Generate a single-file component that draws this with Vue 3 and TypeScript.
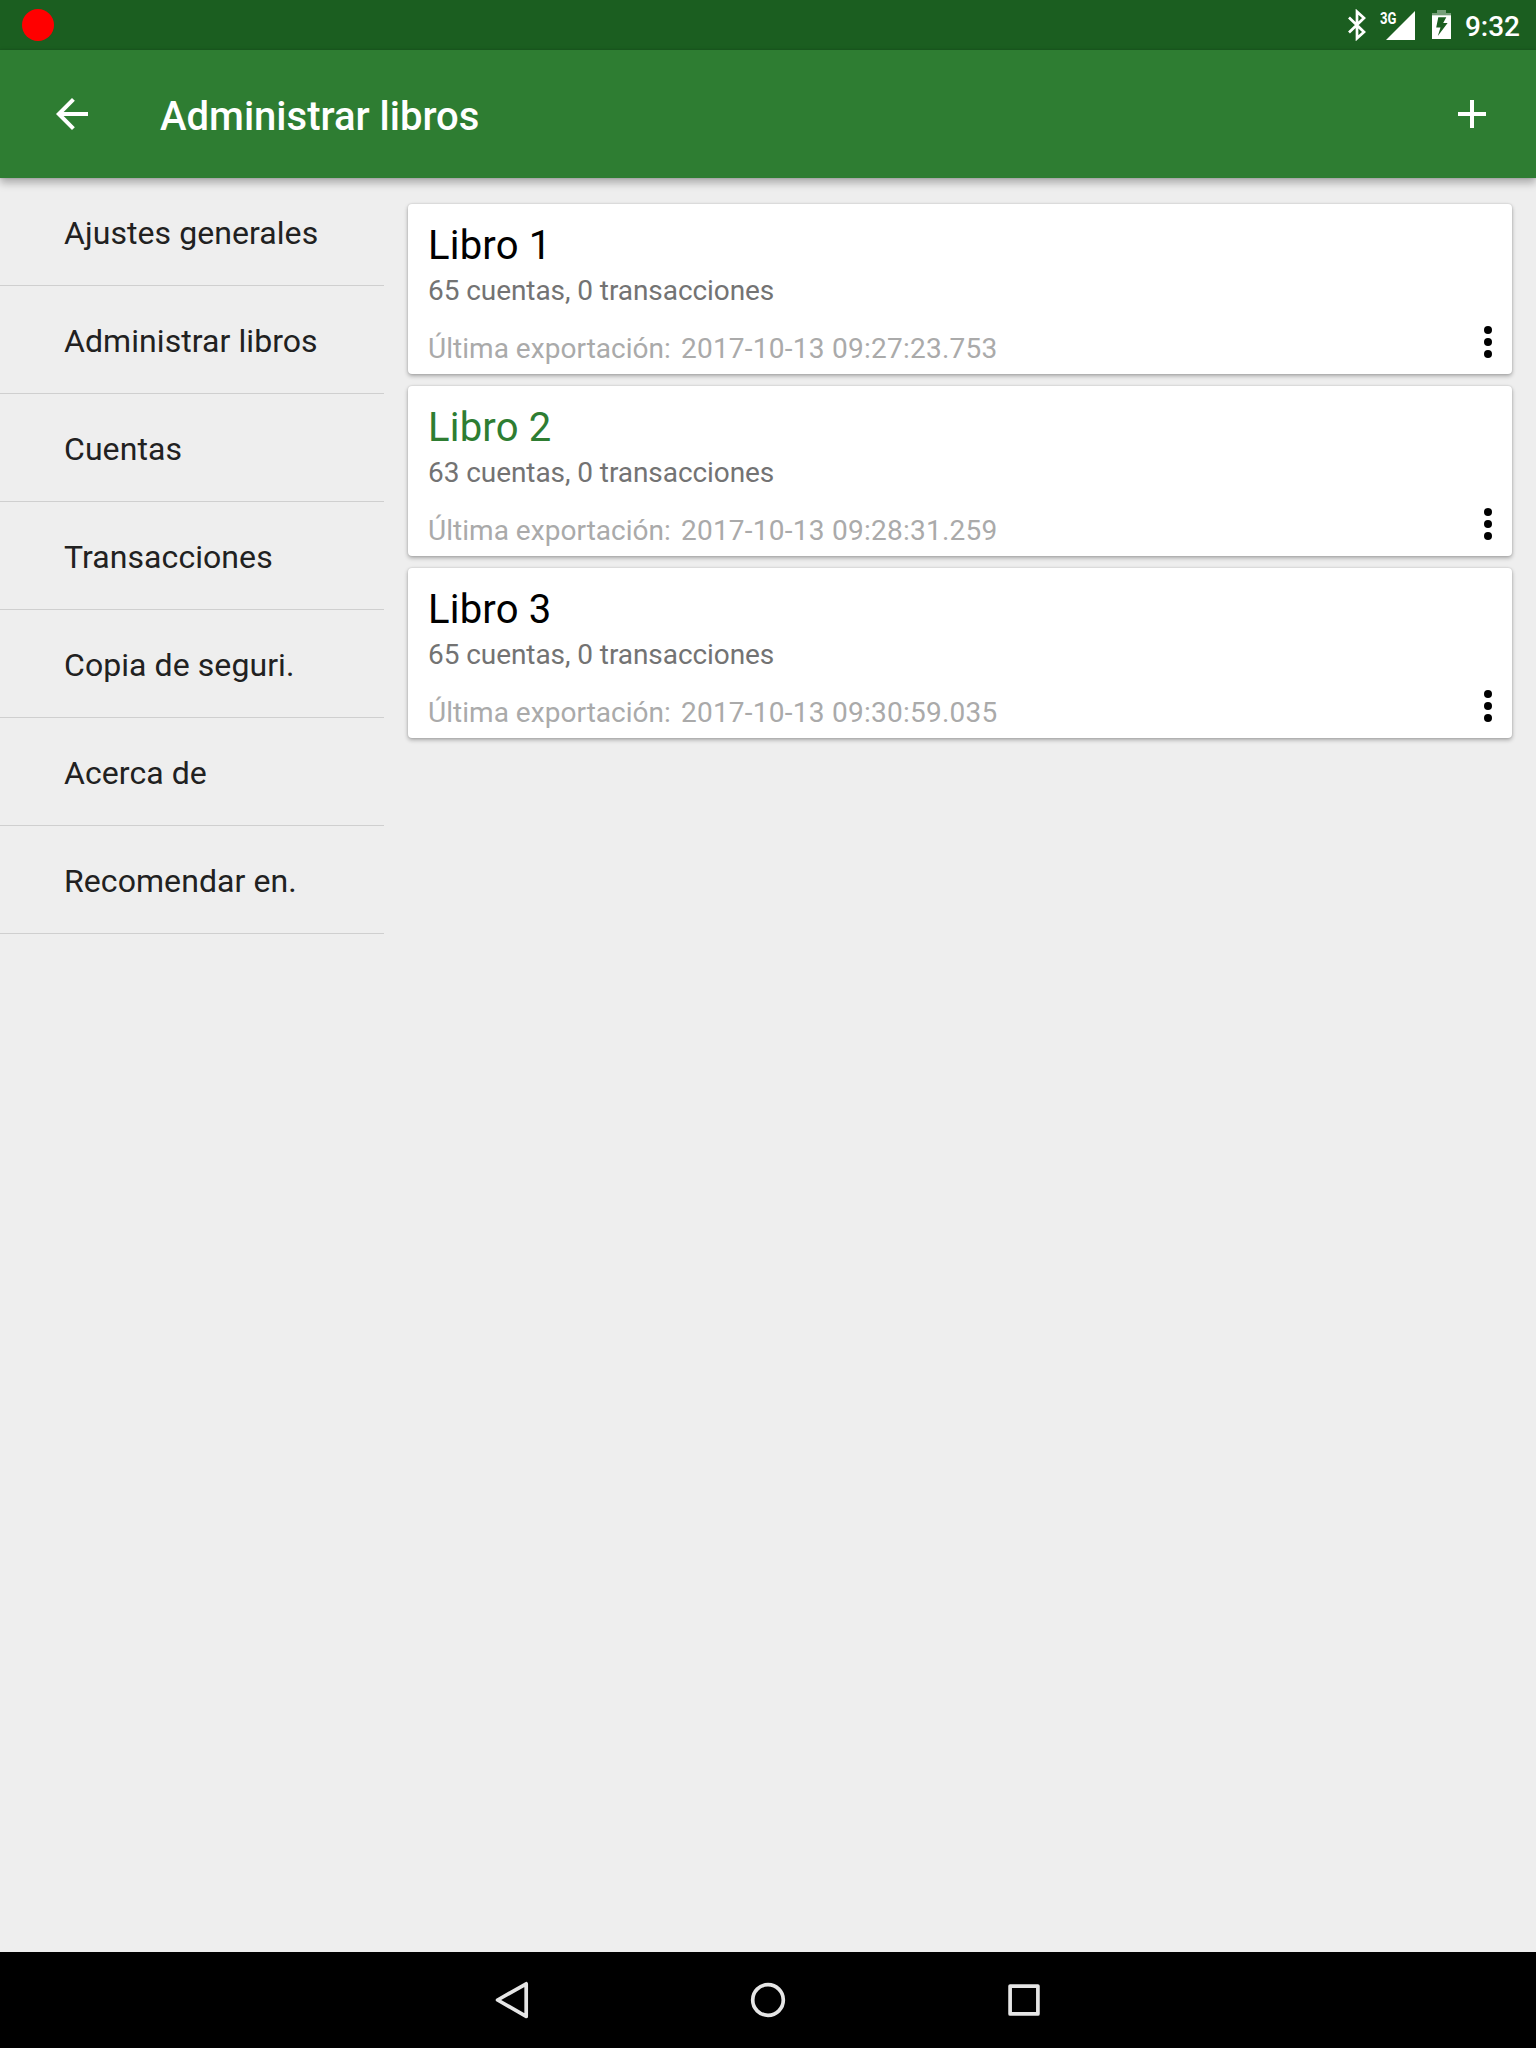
<script setup lang="ts">
interface Book {
  name: string
  stats: string
  exported: string
  active: boolean
}

const menu: string[] = [
  'Ajustes generales',
  'Administrar libros',
  'Cuentas',
  'Transacciones',
  'Copia de seguri.',
  'Acerca de',
  'Recomendar en.',
]

const books: Book[] = [
  { name: 'Libro 1', stats: '65 cuentas, 0 transacciones', exported: '2017-10-13 09:27:23.753', active: false },
  { name: 'Libro 2', stats: '63 cuentas, 0 transacciones', exported: '2017-10-13 09:28:31.259', active: true },
  { name: 'Libro 3', stats: '65 cuentas, 0 transacciones', exported: '2017-10-13 09:30:59.035', active: false },
]
</script>

<template>
  <div class="screen">
    <div class="status">
      <span class="record"></span>
      <div class="tray">
        <svg class="bt" width="20" height="32" viewBox="0 0 20 32">
          <path d="M2 8.5 17 23 10 29.3V2.7L17 9 2 23.5" fill="none" stroke="#fff" stroke-width="2.7" />
        </svg>
        <div class="signal">
          <span class="net">3G</span>
          <svg width="29" height="29" viewBox="0 0 29 29"><path d="M29 0v29H0z" fill="#fff" /></svg>
        </div>
        <svg class="battery" width="19" height="29" viewBox="0 0 19 29">
          <path d="M5 0h9v3h5v2.5H0V3h5z" fill="#fff" fill-opacity=".4" />
          <path fill-rule="evenodd" d="M0 5.3h19V29H0zM6.3 7.2 4.2 17.4h4.3L5.8 26 15.6 13.1h-4.4l3.1-5.9z" fill="#fff" />
        </svg>
        <span class="clock">9:32</span>
      </div>
    </div>

    <header class="toolbar">
      <svg width="48" height="48" viewBox="0 0 24 24">
        <path d="M20 11H7.83l5.59-5.59L12 4l-8 8 8 8 1.41-1.41L7.83 13H20z" fill="#fff" />
      </svg>
      <h1>Administrar libros</h1>
      <svg width="48" height="48" viewBox="0 0 24 24">
        <path d="M19 13h-6v6h-2v-6H5v-2h6V5h2v6h6z" fill="#fff" />
      </svg>
    </header>

    <div class="body">
      <nav class="side">
        <div v-for="item in menu" :key="item" class="item">{{ item }}</div>
      </nav>
      <main class="books">
        <article v-for="book in books" :key="book.name" class="card">
          <div class="info">
            <h2 :class="{ active: book.active }">{{ book.name }}</h2>
            <p class="stats">{{ book.stats }}</p>
            <p class="export"><span>Última exportación:</span><span class="date">{{ book.exported }}</span></p>
          </div>
          <svg class="more" width="48" height="48" viewBox="0 0 24 24">
            <circle cx="12" cy="6" r="2" /><circle cx="12" cy="12" r="2" /><circle cx="12" cy="18" r="2" />
          </svg>
        </article>
      </main>
    </div>

    <footer class="navbar">
      <svg width="256" height="96" viewBox="0 0 256 96">
        <path d="M142.2 31.8v32.6L113.6 48z" fill="none" stroke="#e6e6e6" stroke-width="3.7" stroke-linejoin="round" />
      </svg>
      <svg width="256" height="96" viewBox="0 0 256 96">
        <circle cx="128" cy="48" r="15.3" fill="none" stroke="#e6e6e6" stroke-width="3.7" />
      </svg>
      <svg width="256" height="96" viewBox="0 0 256 96">
        <rect x="114.1" y="34.1" width="27.8" height="27.8" fill="none" stroke="#e6e6e6" stroke-width="3.7" stroke-linejoin="round" />
      </svg>
    </footer>
  </div>
</template>

<style>
body {
  margin: 0;
  background: #eee;
}
</style>

<style scoped>
.screen {
  display: flex;
  flex-direction: column;
  width: 1536px;
  height: 2048px;
  overflow: hidden;
  background: #eee;
  font-family: Roboto, "Noto Sans", sans-serif;
}
svg {
  display: block;
  flex: none;
}
h1, h2, p {
  margin: 0;
}
.status {
  display: flex;
  justify-content: space-between;
  align-items: flex-start;
  box-sizing: border-box;
  height: 50px;
  flex: none;
  padding: 9px 16px 0 22px;
  background: #1b5e20;
}
.record {
  width: 32px;
  height: 32px;
  border-radius: 50%;
  background: red;
}
.tray {
  display: flex;
  align-items: flex-start;
}
.signal {
  position: relative;
  margin: 2px 17px 0 19px;
}
.net {
  position: absolute;
  left: -6px;
  top: 0;
  font: 700 16px/15px Roboto, sans-serif;
  color: #fff;
  transform: scaleX(0.82);
  transform-origin: left;
}
.battery {
  margin-top: 1px;
}
.clock {
  margin: 1px 0 0 14px;
  font-size: 28px;
  line-height: 33px;
  font-weight: 500;
  color: #fff;
}
.toolbar {
  position: relative;
  z-index: 1;
  display: flex;
  align-items: center;
  box-sizing: border-box;
  height: 128px;
  flex: none;
  padding: 0 40px 0 48px;
  background: #2e7d32;
  box-shadow: 0 5px 8px rgba(0, 0, 0, 0.28), 0 0 2px rgba(0, 0, 0, 0.2);
}
.toolbar h1 {
  flex: 1;
  padding: 5px 0 0 64px;
  font-size: 40px;
  line-height: 48px;
  font-weight: 500;
  color: #fff;
}
.body {
  display: flex;
  flex: 1;
}
.side {
  width: 384px;
}
.item {
  box-sizing: border-box;
  height: 108px;
  padding: 3px 0 0 64px;
  border-bottom: 1px solid #cfcfcf;
  font-size: 32px;
  line-height: 104px;
  letter-spacing: 0.07px;
  color: #212121;
  white-space: nowrap;
}
.books {
  display: flex;
  flex: 1;
  flex-direction: column;
  gap: 12px;
  padding: 26px 24px 0;
}
.card {
  display: flex;
  justify-content: space-between;
  align-items: flex-end;
  box-sizing: border-box;
  height: 170px;
  padding: 0 0 8px 20px;
  border-radius: 4px;
  background: #fff;
  box-shadow: 0 2px 4px rgba(0, 0, 0, 0.3), 0 0 2px rgba(0, 0, 0, 0.16);
}
.info {
  align-self: flex-start;
  padding-top: 18px;
}
h2 {
  font-size: 40px;
  line-height: 48px;
  font-weight: 400;
  letter-spacing: 0.2px;
  color: #000;
}
h2.active {
  color: #2e7d32;
}
.stats {
  margin-top: 4px;
  font-size: 28px;
  line-height: 34px;
  letter-spacing: -0.07px;
  color: #737373;
}
.export {
  display: flex;
  gap: 10px;
  margin-top: 24px;
  font-size: 28px;
  line-height: 34px;
  letter-spacing: 0.03px;
  color: #aaa;
}
.date {
  letter-spacing: 0.25px;
}
.navbar {
  display: flex;
  justify-content: center;
  flex: none;
  height: 96px;
  background: #000;
}
</style>
